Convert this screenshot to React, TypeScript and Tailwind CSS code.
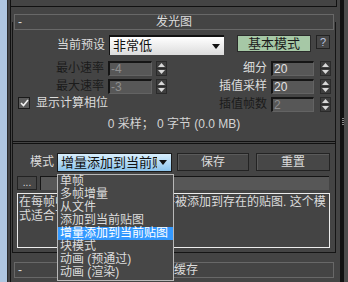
const FONT = { fontFamily: '"Liberation Sans", "Noto Sans CJK SC", sans-serif' };

function Spinner() {
  return (
    <div className="w-[11px] h-[15px] bg-[#3e3e3e] border border-[#2a2a2a] flex flex-col">
      <div className="flex-1 flex items-center justify-center border-b border-[#2a2a2a]">
        <svg width="7" height="4" viewBox="0 0 7 4">
          <path d="M0 4 L3.5 0 L7 4 Z" fill="#d8d8d8" />
        </svg>
      </div>
      <div className="flex-1 flex items-center justify-center">
        <svg width="7" height="4" viewBox="0 0 7 4">
          <path d="M0 0 L7 0 L3.5 4 Z" fill="#d8d8d8" />
        </svg>
      </div>
    </div>
  );
}

function NumField({ value, width, disabled }: { value: string; width: string; disabled?: boolean }) {
  return (
    <div
      className={`${width} h-[15px] bg-[#575757] border-t-2 border-l-2 border-r border-b border-t-[#151515] border-l-[#151515] border-r-[#636363] border-b-[#636363] pl-[1px] text-[12px] leading-[12px] ${
        disabled ? "text-[#8e8e8e]" : "text-[#e2e2e2]"
      }`}
    >
      {value}
    </div>
  );
}

function Arrow() {
  return (
    <svg width="8" height="5" viewBox="0 0 8 5">
      <path d="M0 0 L8 0 L4 5 Z" fill="#111" />
    </svg>
  );
}

function Button({ label, width }: { label: string; width: string }) {
  return (
    <div
      className={`${width} h-[18px] bg-[#474747] border border-[#232323] shadow-[inset_1px_1px_0_#5a5a5a] flex items-center justify-center text-[12px] text-[#dcdcdc]`}
    >
      {label}
    </div>
  );
}

const MODES = ["单帧", "多帧增量", "从文件", "添加到当前贴图", "增量添加到当前贴图", "块模式", "动画 (预通过)", "动画 (渲染)"];

export default function App() {
  return (
    <div className="relative w-[348px] h-[282px] bg-[#444444] overflow-hidden flex select-none" style={FONT}>
      {/* viewport edge */}
      <div className="w-[7px] h-full bg-[#afc6e0]" />
      <div className="w-[3px] h-full border-l border-[#2b2b2b]" />
      <div className="w-[1px] h-full bg-[#111]" />

      {/* rollouts */}
      <div className="w-[329px] h-full flex flex-col">
        <div className="w-[326px] h-[7px] shrink-0 border-b border-r border-[#111]" />
        <div className="h-[7px] shrink-0" />

        <div className="ml-[3px] w-[320px] h-[16px] shrink-0 border border-[#686868] flex items-center text-[12px] text-[#dcdcdc] relative z-10">
          <span className="w-[10px] pl-[3px] leading-none">-</span>
          <span className="flex-1 text-center pr-[10px] leading-none">发光图</span>
        </div>

        <div className="-mt-[8px] ml-[1px] w-[324px] h-[231px] shrink-0 border-l border-r border-b border-[#151515] pt-[13px] flex flex-col text-[12px] text-[#dcdcdc]">
          {/* preset row */}
          <div className="flex items-start h-[20px]">
            <div className="w-[92px] text-right leading-[20px]">当前预设</div>
            <div className="ml-[4px] w-[115px] h-[20px] border-t-2 border-l border-[#111] bg-gradient-to-b from-[#ffffff] to-[#dcdcdc] flex items-center justify-between pl-[3px] pr-[4px] text-[#111] text-[13px]">
              <span>非常低</span>
              <Arrow />
            </div>
            <div className="ml-[13px] w-[74px] h-[17px] bg-[#a6c8a6] border border-[#2a2a2a] flex items-center justify-center text-[#1c1c1c] text-[13px]">
              基本模式
            </div>
            <div className="ml-[5px] w-[14px] h-[14px] bg-[#474747] border border-[#232323] flex items-center justify-center text-[11px] text-[#b9c4e0]">
              ?
            </div>
          </div>

          {/* rate rows */}
          <div className="mt-[6px] flex h-[15px]">
            <div className="w-[154px] flex">
              <div className="w-[91px] text-right leading-[15px] text-[#1b1b1b]">最小速率</div>
              <div className="ml-[4px]"><NumField value="-4" width="w-[44px]" disabled /></div>
              <div className="ml-[4px]"><Spinner /></div>
            </div>
            <div className="w-[100px] text-right leading-[15px]">细分</div>
            <div className="ml-[4px]"><NumField value="20" width="w-[43px]" /></div>
            <div className="ml-[6px]"><Spinner /></div>
          </div>

          <div className="mt-[3px] flex h-[15px]">
            <div className="w-[154px] flex">
              <div className="w-[91px] text-right leading-[15px] text-[#1b1b1b]">最大速率</div>
              <div className="ml-[4px]"><NumField value="-3" width="w-[44px]" disabled /></div>
              <div className="ml-[4px]"><Spinner /></div>
            </div>
            <div className="w-[100px] text-right leading-[15px]">插值采样</div>
            <div className="ml-[4px]"><NumField value="20" width="w-[43px]" /></div>
            <div className="ml-[6px]"><Spinner /></div>
          </div>

          <div className="mt-[3px] flex h-[15px]">
            <div className="w-[154px] flex items-start">
              <div className="ml-[5px] w-[12px] h-[12px] border border-[#1a1a1a] bg-[#5a5a5a] flex items-center justify-center">
                <svg width="9" height="8" viewBox="0 0 9 8">
                  <path d="M1 4 L3.5 6.5 L8 1" stroke="#f2f2f2" strokeWidth="1.6" fill="none" />
                </svg>
              </div>
              <div className="ml-[6px] leading-[13px]">显示计算相位</div>
            </div>
            <div className="w-[100px] text-right leading-[15px] text-[#1b1b1b]">插值帧数</div>
            <div className="ml-[4px]"><NumField value="2" width="w-[43px]" disabled /></div>
            <div className="ml-[6px]"><Spinner /></div>
          </div>

          <div className="mt-[5px] h-[14px] leading-[14px] text-center text-[#d4d4d4]">0 采样； 0 字节 (0.0 MB)</div>

          {/* separator */}
          <div className="mt-[10px] -mx-[1px] h-[3px] border-t border-b border-[#111]" />

          {/* mode row */}
          <div className="mt-[9px] flex items-start h-[19px]">
            <div className="ml-[17px] w-[24px] leading-[19px]">模式</div>
            <div className="ml-[3px] w-[115px] h-[19px] border border-[#1a1a1a] bg-gradient-to-b from-[#d8eefc] to-[#8cc4ec] flex items-center justify-between pl-[3px] pr-[4px] text-[#111] text-[13px] overflow-hidden">
              <span className="whitespace-nowrap overflow-hidden w-[96px]">增量添加到当前贴图</span>
              <Arrow />
            </div>
            <div className="ml-[5px]"><Button label="保存" width="w-[72px]" /></div>
            <div className="ml-[7px]"><Button label="重置" width="w-[74px]" /></div>
          </div>

          {/* file row */}
          <div className="mt-[4px] flex h-[14px]">
            <div className="ml-[4px] w-[20px] h-[14px] bg-[#474747] border border-[#232323] flex items-center justify-center text-[10px] leading-none text-[#dcdcdc]">
              ...
            </div>
            <div className="ml-[3px] w-[289px] h-[14px] bg-[#575757] border-t border-l border-[#151515]" />
          </div>

          {/* description */}
          <div className="mt-[3px] ml-[4px] w-[313px] h-[55px] border border-[#ececec] px-[1px] pt-[1px] text-[12px] leading-[14px] text-[#dcdcdc] whitespace-nowrap overflow-hidden">
            <div>在每帧中，新的光线采样都将被添加到存在的贴图. 这个模</div>
            <div>式适合飞行动画。</div>
          </div>
        </div>

        {/* next rollout */}
        <div className="mt-[9px] ml-[3px] w-[320px] h-[16px] shrink-0 border border-[#686868] flex items-center text-[12px] text-[#dcdcdc]">
          <span className="w-[10px] pl-[3px] leading-none">-</span>
          <span className="flex-1 text-center pr-[10px] leading-none">灯光缓存</span>
        </div>
      </div>

      {/* scroll strip */}
      <div className="w-[4px] h-full bg-[#111] flex flex-col items-end pt-[118px] gap-[1px]">
        <div className="w-[2px] h-[1px] bg-[#8a8a8a] mr-[0px]" />
        <div className="w-[2px] h-[1px] bg-[#8a8a8a]" />
        <div className="w-[2px] h-[1px] bg-[#8a8a8a]" />
        <div className="w-[2px] h-[1px] bg-[#8a8a8a]" />
      </div>
      <div className="w-[4px] h-full bg-[#4c4c4c]" />

      {/* open dropdown list */}
      <div className="absolute left-[57px] top-[174px] w-[117px] h-[107px] bg-[#474747] border border-[#b8b8b8] text-[12px] text-[#dcdcdc]">
        {MODES.map((m, i) => (
          <div
            key={m}
            className={`h-[13px] leading-[13px] pl-[2px] whitespace-nowrap ${i === 4 ? "bg-[#3399ff] text-white" : ""}`}
          >
            {m}
          </div>
        ))}
      </div>
    </div>
  );
}
